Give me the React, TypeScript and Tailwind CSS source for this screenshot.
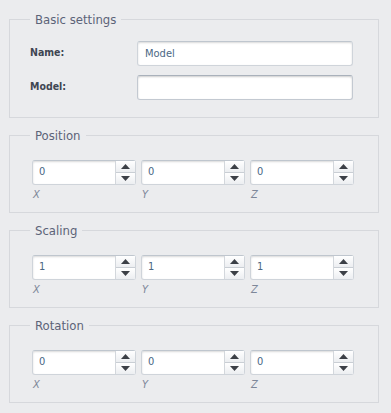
import { useState } from "react";

const font = { fontFamily: '"DejaVu Sans Condensed", "DejaVu Sans", Verdana, sans-serif' };

const Spinner = ({ value }: { value: string }) => {
  const [v, setV] = useState(value);
  return (
    <div className="flex h-[25px] w-[104px] rounded-[3px] border border-[#cfd4da] border-t-[#bfc6ce] bg-white shadow-[inset_0_1px_2px_rgba(0,0,0,0.15)]">
      <input
        value={v}
        onChange={(e) => setV(e.target.value)}
        className="min-w-0 flex-1 bg-transparent pl-[6px] text-[11px] text-[#4b6784] outline-none"
      />
      <div className="flex w-[20px] flex-col border-l border-[#d3d7dc]">
        <button
          onClick={() => setV(String(Number(v) + 1))}
          className="flex flex-1 items-center justify-center border-b border-[#c9ced4] bg-gradient-to-b from-white to-[#eceef1]"
        >
          <svg width="9" height="5" viewBox="0 0 9 5">
            <path d="M0 5 L4.5 0 L9 5 Z" fill="#3b3f46" />
          </svg>
        </button>
        <button
          onClick={() => setV(String(Number(v) - 1))}
          className="flex flex-1 items-center justify-center bg-gradient-to-b from-white to-[#eceef1]"
        >
          <svg width="9" height="5" viewBox="0 0 9 5">
            <path d="M0 0 L9 0 L4.5 5 Z" fill="#3b3f46" />
          </svg>
        </button>
      </div>
    </div>
  );
};

const VectorSet = ({ title, value }: { title: string; value: string }) => (
  <fieldset className="ml-[9px] mr-[12px] mt-[8px] h-[87px] border border-[#d6d8dc] pl-[22px] pr-0">
    <legend className="-ml-[2px] px-[5px] text-[13px] text-[#5c6378]">{title}</legend>
    <div className="mt-[14px] flex gap-[5px]">
      {["X", "Y", "Z"].map((axis) => (
        <div key={axis} className="flex flex-col">
          <Spinner value={value} />
          <span className="mt-[2px] pl-[1px] text-[11px] italic text-[#7d8799]">{axis}</span>
        </div>
      ))}
    </div>
  </fieldset>
);

const App = () => {
  const [name, setName] = useState("Model");
  const [model, setModel] = useState("");

  return (
    <div className="h-[413px] w-[391px] overflow-hidden bg-[#ebecee] pt-[10px]" style={font}>
      <fieldset className="ml-[9px] mr-[12px] h-[108px] border border-[#d6d8dc] pl-[20px] pr-[25px]">
        <legend className="px-[5px] text-[13px] text-[#5c6378]">Basic settings</legend>
        <div className="mt-[11px] flex items-center justify-between">
          <label className="text-[10.5px] font-bold text-[#3e4652]">Name:</label>
          <input
            value={name}
            onChange={(e) => setName(e.target.value)}
            className="h-[25px] w-[216px] rounded-[3px] border border-[#cfd4da] border-t-[#bfc6ce] bg-white px-[7px] text-[11px] text-[#4b6784] shadow-[inset_0_1px_2px_rgba(0,0,0,0.15)] outline-none"
          />
        </div>
        <div className="mt-[9px] flex items-center justify-between">
          <label className="text-[10.5px] font-bold text-[#3e4652]">Model:</label>
          <input
            value={model}
            onChange={(e) => setModel(e.target.value)}
            className="h-[25px] w-[216px] rounded-[3px] border border-[#c3c9d1] border-t-[#a9b1bb] bg-white px-[7px] text-[11px] text-[#4b6784] shadow-[inset_0_1px_2px_rgba(0,0,0,0.2)] outline-none"
          />
        </div>
      </fieldset>
      <VectorSet title="Position" value="0" />
      <VectorSet title="Scaling" value="1" />
      <VectorSet title="Rotation" value="0" />
    </div>
  );
};

export default App;
